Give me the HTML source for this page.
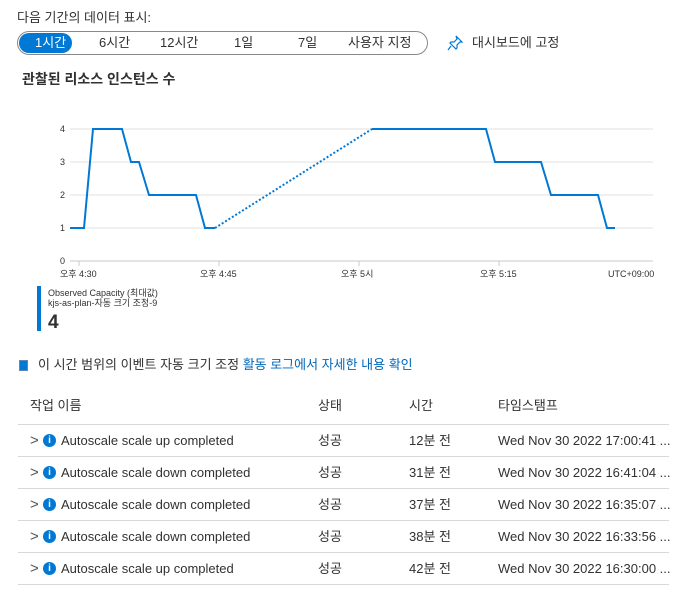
<!DOCTYPE html><html><head><meta charset="utf-8"><style>
body{margin:0;width:679px;height:589px;background:#fff;font-family:"Liberation Sans","Noto Sans CJK KR",sans-serif;color:#323130;position:relative;overflow:hidden}
.a{position:absolute;white-space:nowrap;line-height:18px}
.pill{position:absolute;left:17px;top:31px;width:411px;height:24px;border:1px solid #8a8886;border-radius:12px;box-sizing:border-box}
.sel{position:absolute;left:19px;top:33px;width:53px;height:20px;background:#0078d4;border-radius:10px}
.row{position:absolute;left:18px;width:651px;border-top:1px solid #d8d8d8;height:31px;font-size:13px}
.row span{position:absolute;top:7px;white-space:nowrap;line-height:18px}
.i{left:25px;top:9px!important;width:13px;height:13px;border-radius:50%;background:#0078d4;color:#fff;font-size:10px!important;font-weight:bold;text-align:center;line-height:13px!important}
.chev{left:12px;font-size:15px;color:#555}
</style></head><body>
<div class="a" style="left:17px;top:9px;font-size:13px">다음 기간의 데이터 표시:</div>
<div class="pill"></div><div class="sel"></div>
<div class="a" style="left:35px;top:34px;font-size:13px;color:#fff">1시간</div>
<div class="a" style="left:99px;top:34px;font-size:13px">6시간</div>
<div class="a" style="left:160px;top:34px;font-size:13px">12시간</div>
<div class="a" style="left:234px;top:34px;font-size:13px">1일</div>
<div class="a" style="left:298px;top:34px;font-size:13px">7일</div>
<div class="a" style="left:348px;top:34px;font-size:13px">사용자 지정</div>
<svg class="a" style="left:446px;top:34px" width="18" height="18" viewBox="0 0 18 18"><path d="M10 2l6 6-2 0-3 3 0 3-1 1-6-6 1-1 3 0 3-3z M5 12l-3 4" fill="none" stroke="#0078d4" stroke-width="1.2"/></svg>
<div class="a" style="left:472px;top:34px;font-size:13px">대시보드에 고정</div>
<div class="a" style="left:22px;top:70px;font-size:14px;font-weight:bold">관찰된 리소스 인스턴스 수</div>
<svg class="a" style="left:0;top:0" width="679" height="300">
<g stroke="#e1e1e1"><line x1="70" y1="129" x2="653" y2="129"/><line x1="70" y1="162" x2="653" y2="162"/><line x1="70" y1="195" x2="653" y2="195"/><line x1="70" y1="228" x2="653" y2="228"/></g>
<line x1="70" y1="261" x2="653" y2="261" stroke="#c8c8c8"/>
<g stroke="#c8c8c8"><line x1="79" y1="261" x2="79" y2="266"/><line x1="219" y1="261" x2="219" y2="266"/><line x1="359" y1="261" x2="359" y2="266"/><line x1="499" y1="261" x2="499" y2="266"/></g>
<g font-size="9" fill="#323130" font-family="Liberation Sans"><text x="60" y="132">4</text><text x="60" y="165">3</text><text x="60" y="198">2</text><text x="60" y="231">1</text><text x="60" y="264">0</text></g>
<g font-size="9" fill="#323130" font-family="Liberation Sans,Noto Sans CJK KR"><text x="60" y="277">오후 4:30</text><text x="200" y="277">오후 4:45</text><text x="341" y="277">오후 5시</text><text x="480" y="277">오후 5:15</text><text x="608" y="277">UTC+09:00</text></g>
<polyline fill="none" stroke="#0078d4" stroke-width="2" points="70,228 84,228 93,129 122,129 131,162 139,162 149,195 196,195 205,228 215,228"/>
<line x1="215" y1="228" x2="372" y2="129" stroke="#0078d4" stroke-width="2" stroke-dasharray="2,2"/>
<polyline fill="none" stroke="#0078d4" stroke-width="2" points="372,129 486,129 495,162 541,162 551,195 598,195 607,228 615,228"/>
</svg>
<div class="a" style="left:37px;top:286px;width:4px;height:45px;background:#0078d4"></div>
<div class="a" style="left:48px;top:288px;font-size:9px;line-height:11px">Observed Capacity (최대값)</div>
<div class="a" style="left:48px;top:298px;font-size:9px;line-height:11px">kjs-as-plan-자동 크기 조정-9</div>
<div class="a" style="left:48px;top:312px;font-size:19px;font-weight:bold;line-height:22px">4</div>
<div class="a" style="left:19px;top:360px;width:7px;height:9px;background:#0078d4;border:1px solid #5a8ab8"></div>
<div class="a" style="left:38px;top:356px;font-size:13px">이 시간 범위의 이벤트 자동 크기 조정 <span style="color:#0067b8">활동 로그에서 자세한 내용 확인</span></div>
<div class="a" style="left:30px;top:397px;font-size:13px">작업 이름</div>
<div class="a" style="left:318px;top:397px;font-size:13px">상태</div>
<div class="a" style="left:409px;top:397px;font-size:13px">시간</div>
<div class="a" style="left:498px;top:397px;font-size:13px">타임스탬프</div>
<div class="row" style="top:424px"><span class="chev">&gt;</span><span class="i">i</span><span style="left:43px">Autoscale scale up completed</span><span style="left:300px">성공</span><span style="left:391px">12분 전</span><span style="left:480px">Wed Nov 30 2022 17:00:41 ...</span></div>
<div class="row" style="top:456px"><span class="chev">&gt;</span><span class="i">i</span><span style="left:43px">Autoscale scale down completed</span><span style="left:300px">성공</span><span style="left:391px">31분 전</span><span style="left:480px">Wed Nov 30 2022 16:41:04 ...</span></div>
<div class="row" style="top:488px"><span class="chev">&gt;</span><span class="i">i</span><span style="left:43px">Autoscale scale down completed</span><span style="left:300px">성공</span><span style="left:391px">37분 전</span><span style="left:480px">Wed Nov 30 2022 16:35:07 ...</span></div>
<div class="row" style="top:520px"><span class="chev">&gt;</span><span class="i">i</span><span style="left:43px">Autoscale scale down completed</span><span style="left:300px">성공</span><span style="left:391px">38분 전</span><span style="left:480px">Wed Nov 30 2022 16:33:56 ...</span></div>
<div class="row" style="top:552px;border-bottom:1px solid #d8d8d8"><span class="chev">&gt;</span><span class="i">i</span><span style="left:43px">Autoscale scale up completed</span><span style="left:300px">성공</span><span style="left:391px">42분 전</span><span style="left:480px">Wed Nov 30 2022 16:30:00 ...</span></div>
</body></html>
